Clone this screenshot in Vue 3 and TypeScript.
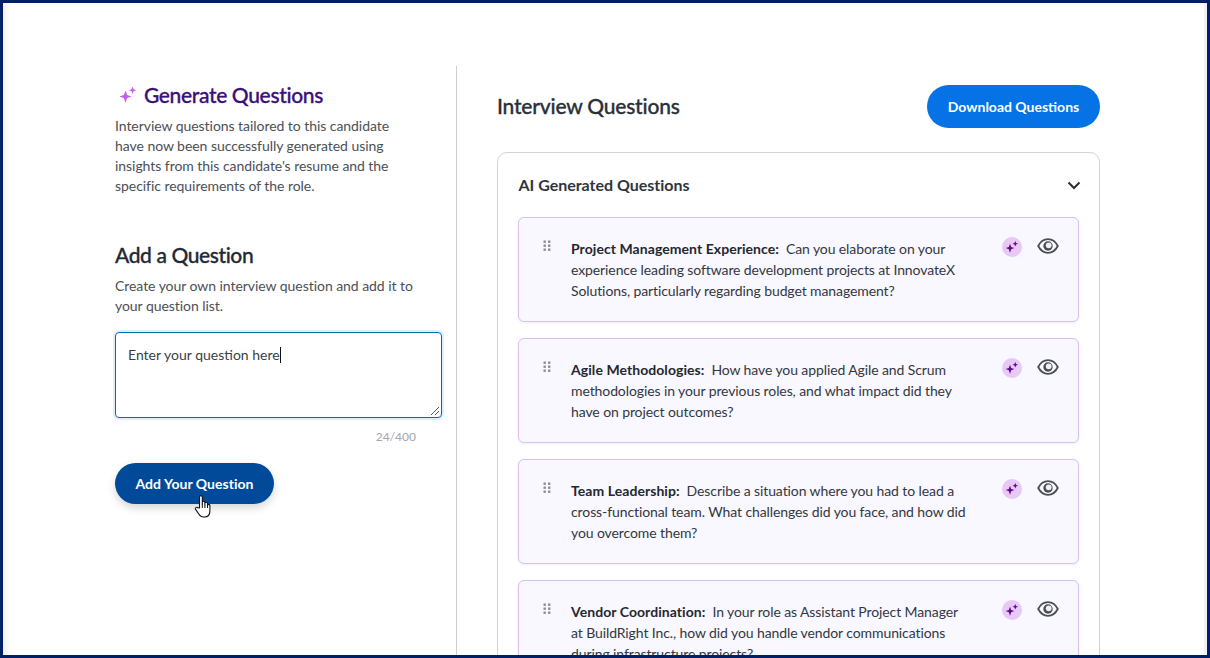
<template>
  <div class="frame">
    <div class="page">
      <aside class="left">
        <div class="gen-head">
          <svg class="spark" viewBox="0 0 18 18" width="18" height="18">
            <path d="M6.5 4.6 L8.1 8.9 L12.6 10.5 L8.1 12.1 L6.5 17 L4.9 12.1 L.4 10.5 L4.9 8.9 Z" fill="#c65ce8" />
            <path d="M13.5 .6 L14.5 3.3 L17.2 4.3 L14.5 5.3 L13.5 8 L12.5 5.3 L9.8 4.3 L12.5 3.3 Z" fill="#c65ce8" />
          </svg>
          <h2 class="gen-title">Generate Questions</h2>
        </div>
        <p class="gen-text">
          Interview questions tailored to this candidate have now been successfully generated using
          insights from this candidate's resume and the specific requirements of the role.
        </p>

        <h3 class="add-title">Add a Question</h3>
        <p class="add-text">Create your own interview question and add it to your question list.</p>

        <div class="input-box">
          <span class="input-value">{{ draft }}</span><span class="caret"></span>
          <svg class="grip" viewBox="0 0 10 10" width="10" height="10">
            <path d="M1 9 L9 1 M5 9 L9 5" stroke="#555" stroke-width="1" fill="none" />
          </svg>
        </div>
        <div class="counter">{{ draft.length }}/400</div>

        <div class="add-wrap">
          <button class="add-btn">Add Your Question</button>
          <svg class="cursor" viewBox="0 0 18 25" width="18" height="25">
            <path
              d="M5.5 14 V3 a1.4 1.4 0 0 1 2.8 0 V10 V8.6 a1.3 1.3 0 0 1 2.6 0 V11 V9.6 a1.3 1.3 0 0 1 2.6 0 V11.6 a1.2 1.2 0 0 1 2.4 0 V17 c0 3.6 -2 6 -5.4 6 H9.6 c-2.4 0 -3.6 -1 -4.8 -3 L1.6 15.4 c-.9 -1.5 1.1 -2.8 2.2 -1.6 Z"
              fill="#fff"
              stroke="#111"
              stroke-width="1.1"
              stroke-linejoin="round"
            />
            <path d="M8.3 10 V14 M10.9 11 V14 M13.5 11.6 V14" stroke="#111" stroke-width="1" fill="none" />
          </svg>
        </div>
      </aside>

      <main class="right">
        <div class="right-head">
          <h2 class="right-title">Interview Questions</h2>
          <button class="download-btn">Download Questions</button>
        </div>

        <section class="panel">
          <div class="panel-head">
            <span class="panel-title">AI Generated Questions</span>
            <svg class="chevron" viewBox="0 0 14 9" width="14" height="9">
              <path d="M1.5 1.5 L7 7 L12.5 1.5" stroke="#2a2f36" stroke-width="2" fill="none" />
            </svg>
          </div>

          <div class="list">
            <article v-for="q in questions" :key="q.topic" class="card">
              <svg class="drag" viewBox="0 0 8 12" width="8" height="12">
                <template v-for="y in [1.5, 5.5, 9.5]" :key="y">
                  <rect x="0.5" :y="y - 1" width="2.4" height="2.4" fill="#8a8e96" />
                  <rect x="5" :y="y - 1" width="2.4" height="2.4" fill="#8a8e96" />
                </template>
              </svg>
              <p class="card-text"><strong>{{ q.topic }}:</strong>&nbsp; {{ q.body }}</p>
              <div class="card-actions">
                <span class="ai-badge">
                  <svg viewBox="0 0 12 12" width="14" height="14">
                    <path d="M4.3 3.2 L5.3 5.9 L8 6.9 L5.3 7.9 L4.3 10.9 L3.3 7.9 L.6 6.9 L3.3 5.9 Z" fill="#5f0a8c" />
                    <path d="M8.8 .8 L9.5 2.5 L11.2 3.2 L9.5 3.9 L8.8 5.6 L8.1 3.9 L6.4 3.2 L8.1 2.5 Z" fill="#5f0a8c" />
                  </svg>
                </span>
                <svg class="eye" viewBox="0 0 22 16" width="22" height="16">
                  <path
                    d="M1.2 8 C3.6 3.4 7 1.2 11 1.2 S18.4 3.4 20.8 8 C18.4 12.6 15 14.8 11 14.8 S3.6 12.6 1.2 8 Z"
                    fill="none"
                    stroke="#4a4d52"
                    stroke-width="1.8"
                  />
                  <circle cx="11" cy="8" r="4.7" fill="#4a4d52" />
                  <circle cx="11.7" cy="7.3" r="2.9" fill="#f0eef5" />
                </svg>
              </div>
            </article>
          </div>
        </section>
      </main>
    </div>
  </div>
</template>

<script setup lang="ts">
import { ref } from 'vue'

interface Question {
  topic: string
  body: string
}

const draft = ref('Enter your question here')

const questions: Question[] = [
  {
    topic: 'Project Management Experience',
    body: 'Can you elaborate on your experience leading software development projects at InnovateX Solutions, particularly regarding budget management?',
  },
  {
    topic: 'Agile Methodologies',
    body: 'How have you applied Agile and Scrum methodologies in your previous roles, and what impact did they have on project outcomes?',
  },
  {
    topic: 'Team Leadership',
    body: 'Describe a situation where you had to lead a cross-functional team. What challenges did you face, and how did you overcome them?',
  },
  {
    topic: 'Vendor Coordination',
    body: 'In your role as Assistant Project Manager at BuildRight Inc., how did you handle vendor communications during infrastructure projects?',
  },
]
</script>

<style>
html,
body {
  margin: 0;
  overflow: hidden;
}
</style>

<style scoped>
.frame {
  box-sizing: border-box;
  width: 1210px;
  height: 658px;
  border: 3px solid #001f66;
  background: linear-gradient(to right, #f0f0f0, #fff 8px, #fff calc(100% - 3px), #f0f2f6 calc(100% - 3px));
  overflow: hidden;
  font-family: Lato, "Liberation Sans", sans-serif;
  color: #22282f;
}

.page {
  display: flex;
  padding-top: 63px;
  height: 100%;
  box-sizing: border-box;
}

.left {
  box-sizing: border-box;
  width: 454px;
  padding: 14px 14px 0 112px;
  border-right: 1px solid #c9ced3;
}

.gen-head {
  display: flex;
  align-items: center;
  gap: 7px;
  height: 30px;
  margin-left: 4px;
}

.spark {
  flex: none;
}

.gen-title {
  margin: 0 0 2px;
  font-size: 21px;
  letter-spacing: -0.35px;
  font-weight: 500;
  color: #3a1078;
  -webkit-text-stroke: 0.3px #3a1078;
  white-space: nowrap;
}

.gen-text {
  margin: 6px 0 0;
  width: 290px;
  font-size: 14px;
  line-height: 20px;
  letter-spacing: -0.05px;
  color: #4b5056;
}

.add-title {
  margin: 45px 0 0;
  font-size: 21px;
  letter-spacing: -0.4px;
  line-height: 28px;
  font-weight: 500;
  color: #1f2a35;
  -webkit-text-stroke: 0.3px #1f2a35;
}

.add-text {
  margin: 7px 0 0;
  width: 310px;
  font-size: 14px;
  line-height: 20px;
  letter-spacing: -0.05px;
  color: #4b5056;
}

.input-box {
  position: relative;
  box-sizing: border-box;
  width: 327px;
  height: 86px;
  margin-top: 16px;
  padding: 12px;
  border: 1px solid #0a6aa8;
  border-radius: 4px;
  box-shadow: 0 0 0 2px #e0eefb;
  font-size: 14px;
  line-height: 20px;
  color: #3a3f45;
}

.caret {
  display: inline-block;
  width: 1px;
  height: 16px;
  background: #111;
  vertical-align: -3px;
}

.grip {
  position: absolute;
  right: 1px;
  bottom: 1px;
}

.counter {
  width: 301px;
  margin-top: 12px;
  text-align: right;
  font-size: 12px;
  line-height: 14px;
  color: #a2a6ad;
}

.add-wrap {
  position: relative;
  width: 159px;
  margin-top: 19px;
}

.add-btn {
  width: 159px;
  height: 41px;
  border: none;
  border-radius: 21px;
  background: #004a99;
  box-shadow: 0 4px 8px rgba(0, 0, 0, 0.16);
  color: #fff;
  font-family: inherit;
  font-size: 14px;
  letter-spacing: 0.03px;
  font-weight: 700;
}

.cursor {
  position: absolute;
  left: 79px;
  top: 31px;
}

.right {
  box-sizing: border-box;
  width: 643px;
  padding: 19px 0 0 40px;
}

.right-head {
  display: flex;
  align-items: center;
  justify-content: space-between;
}

.right-title {
  margin: 0 0 2px;
  font-size: 21px;
  letter-spacing: -0.2px;
  font-weight: 500;
  color: #2a3038;
  -webkit-text-stroke: 0.3px #2a3038;
}

.download-btn {
  width: 173px;
  height: 43px;
  border: none;
  border-radius: 22px;
  background: #0573e6;
  color: #fff;
  font-family: inherit;
  font-size: 14px;
  font-weight: 700;
}

.panel {
  margin-top: 24px;
  padding: 0 20px 20px;
  border: 1px solid #cfd3d8;
  border-radius: 10px;
}

.panel-head {
  display: flex;
  align-items: center;
  justify-content: space-between;
  height: 64px;
}

.panel-title {
  margin: 0 0 2px 0.5px;
  font-size: 16px;
  font-weight: 700;
  letter-spacing: -0.02px;
  color: #2f353c;
}

.chevron {
  margin-right: -2px;
}

.list {
  display: flex;
  flex-direction: column;
  gap: 16px;
}

.card {
  box-sizing: border-box;
  display: flex;
  align-items: flex-start;
  height: 105px;
  padding: 20px 19px 0 24px;
  background: #f9f7ff;
  border: 1px solid #d5c3ee;
  border-radius: 6px;
  box-shadow: 0 1px 3px rgba(60, 40, 120, 0.08);
}

.drag {
  flex: none;
  margin-top: 2px;
}

.card-text {
  width: 398px;
  margin: 0 0 0 20px;
  flex: none;
  font-size: 14px;
  line-height: 21px;
  letter-spacing: -0.1px;
  color: #33383e;
}

.card-text strong {
  letter-spacing: 0.06px;
  color: #24282e;
}

.card-actions {
  display: flex;
  align-items: flex-start;
  gap: 15px;
  margin: -2px 0 0 auto;
}

.ai-badge {
  display: flex;
  align-items: center;
  justify-content: center;
  width: 20px;
  height: 20px;
  margin-top: 1px;
  border-radius: 50%;
  background: #e8c8f7;
}

.eye {
  margin-top: 2px;
}
</style>
